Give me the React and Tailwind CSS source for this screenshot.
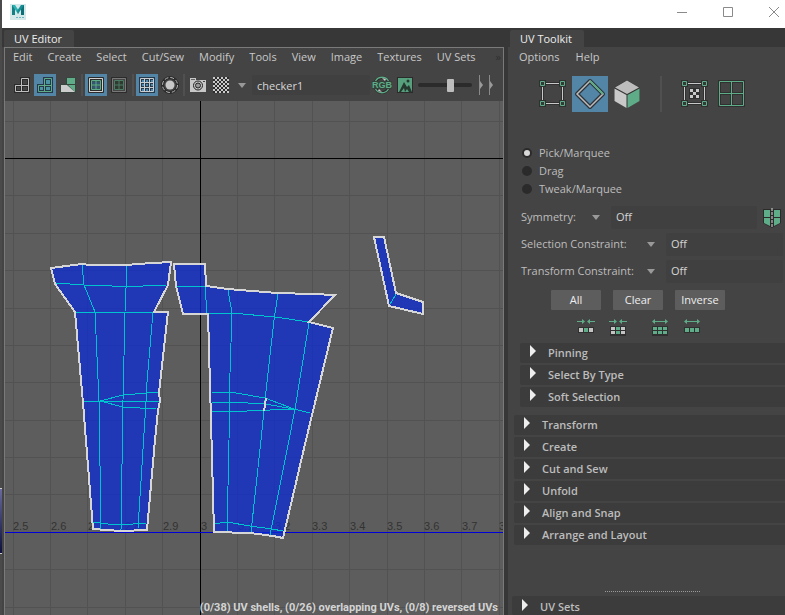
import React from "react";

const GREEN = "#5fad88";
const LIGHT = "#bfbfbf";
const EDGE = "#2b2b2b";

/* ---------- UV canvas ---------- */

const GRID_X = [13, 50, 87, 125, 162, 237, 274, 312, 349, 387, 424, 461, 499, 536, 574, 611, 649, 686, 724, 761];
const GRID_Y = [121, 195, 233, 270, 308, 345, 382, 420, 457, 494, 569, 607, 644, 681, 719, 756];
const LABELS = [
  [13, "2.5"], [51, "2.6"], [88, "2.7"], [125, "2.8"], [163, "2.9"], [201, "3"], [238, "3.1"],
  [275, "3.2"], [312, "3.3"], [350, "3.4"], [387, "3.5"], [424, "3.6"], [462, "3.7"], [499, "3.8"],
];

const SHELLS = [
  "51,268 82,264 90,265 127,265 138,264 153,263 171,262 168,285 154,312 168,312 159,393 160,401 158,410 155,440 147,530 121,531 107,530 93,529 83,403 75,312 55,284",
  "174,264 205,264 206,286 228,289 277,293 312,294 335,295 309,322 333,328 306,440 283,538 273,536 250,533 214,532 211,420 208,314 183,314 176,286",
  "374,237 384,237 396,293 423,302 423,314 389,306",
];

const EDGES = [
  "82,265 84,285 95,312 99,401 101,529",
  "127,265 125,312 123,400 121,530",
  "153,312 147,382 146,402 138,528",
  "55,283 84,285 112,286 125,286 143,286 166,285",
  "75,312 109,312 125,313 153,312",
  "83,401 160,401",
  "158,392 123,395 100,401 123,407 156,409",
  "93,522 108,524 121,525 146,523",
  "228,290 232,313 230,373 229,440 227,532",
  "278,294 274,320 265,400 261,440 251,532",
  "309,323 295,409 289,440 270,535",
  "176,286 205,286 207,313 232,313 275,317 309,322",
  "212,393 230,392 265,398 294,409 310,413",
  "212,402 230,402 265,404 294,409",
  "212,411 247,411 294,409",
  "214,524 227,522 250,526 272,529 283,531",
  "396,294 389,306",
];

function UvCanvas() {
  return (
    <div className="relative min-h-[300px] flex-1 overflow-hidden bg-[#5d5d5d]">
      <svg className="absolute inset-0 h-full w-full" aria-label="UV layout">
        <g transform="translate(-5 -101)" shapeRendering="crispEdges">
          {GRID_X.map((x) => <rect key={x} x={x} y="0" width="1" height="2000" fill="#525252" />)}
          {GRID_Y.map((y) => <rect key={y} x="0" y={y} width="3000" height="1" fill="#525252" />)}
          <rect x="200" y="0" width="1" height="2000" fill="#000" />
          <rect x="0" y="158" width="3000" height="1" fill="#000" />
          <rect x="0" y="532" width="3000" height="1" fill="#0000d8" />
          <g fill="#333" fontFamily="'Liberation Sans', Arial, sans-serif" fontSize="11">
            {LABELS.map(([x, t]) => <text key={t} x={x} y="530">{t}</text>)}
          </g>
          {SHELLS.map((p) => <polygon key={p} points={p} fill="#0c2cd4" fillOpacity="0.75" />)}
          {EDGES.map((p) => <polyline key={p} points={p} fill="none" stroke="#00c3d0" strokeWidth="1" />)}
          {SHELLS.map((p) => <polygon key={p} points={p} fill="none" stroke="#d6d6d6" strokeWidth="2" />)}
          <path d="M266 398L264 411" stroke="#d6d6d6" strokeWidth="2" />
        </g>
      </svg>
      <p className="absolute right-[5px] bottom-px font-[Roboto,Arial,sans-serif] text-[11px] leading-[13px] font-bold whitespace-nowrap text-[#d4d4d4]">
        (0/38) UV shells, (0/26) overlapping UVs, (0/8) reversed UVs
      </p>
    </div>
  );
}

/* ---------- small pieces ---------- */

function Svg({ w, h, children, className = "" }) {
  return (
    <svg width={w} height={h} viewBox={`0 0 ${w} ${h}`} className={`block shrink-0 ${className}`} aria-hidden="true" fill="none">
      {children}
    </svg>
  );
}

function Down() {
  return <Svg w={8} h={5}><path d="M0 0h8L4 5z" fill="#999999" /></Svg>;
}

function ToolButton({ label, active, children }) {
  return (
    <button
      type="button"
      aria-label={label}
      className={`flex size-[22px] shrink-0 items-center justify-center ${active ? "bg-[#5285a6]" : ""}`}
    >
      {children}
    </button>
  );
}

function Sep({ className }) {
  return <span className={`w-[2px] shrink-0 bg-[#505050] ${className}`} />;
}

const STEP = "M1.5 14.5V8.5H7.5V1.5H14.5V14.5ZM1.5 8.5H14.5M7.5 8.5V14.5";

function FlatShell() {
  return <Svg w={16} h={16}><path d={STEP} stroke={EDGE} strokeWidth="3" /><path d={STEP} stroke={LIGHT} /></Svg>;
}
function FilledShell() {
  return (
    <Svg w={16} h={16}>
      <path d={STEP} stroke="#27384a" strokeWidth="3" />
      <path d={STEP} stroke={GREEN} />
      <path d="M3 10h3v3H3zM9 10h4v3H9zM9 3h4v4H9z" fill="#4c93a5" />
    </Svg>
  );
}
function SplitShell() {
  return (
    <Svg w={16} h={16}>
      <path d="M0 7h6V0h10v16H0z" fill="#38443e" />
      <path d="M7 1h8v6H7z" fill={GREEN} />
      <path d="M8 8h7v7z" fill={GREEN} />
      <path d="M1 8h6l8 7H1z" fill="#cccccc" />
    </Svg>
  );
}
function BorderOn() {
  return (
    <Svg w={16} h={16}>
      <path d="M.5 .5h15v15H.5z" stroke={EDGE} />
      <path d="M1.5 1.5h13v13h-13z" stroke="#d2d2d2" />
      <path d="M2 2h12v12H2z" fill={EDGE} />
      <path d="M3.500 3.500h9v9h-9z" fill="#2f5a58" stroke={GREEN} />
      <path d="M8 4v8M4 8h8" stroke={GREEN} />
      <path d="M5 5h2v2H5zM9 5h2v2H9zM5 9h2v2H5zM9 9h2v2H9z" fill="#3d4f85" />
    </Svg>
  );
}
function BorderOff() {
  return (
    <Svg w={16} h={16}>
      <path d="M.5 .5h15v15H.5z" stroke={EDGE} />
      <path d="M1.5 1.5h13v13h-13z" stroke="#787878" />
      <path d="M3 3h10v10H3z" fill="#303830" />
      <path d="M3.500 3.500h9v9h-9zM8 3v10M3 8h10" stroke="#4b7d65" />
    </Svg>
  );
}
function GridIcon() {
  const d = "M1.5 1.5h13v13h-13zM5.5 1v14M10.5 1v14M1 5.5h14M1 10.5h14";
  return (
    <Svg w={16} h={16}>
      <path d="M.5 .5h15v15H.5z" stroke={EDGE} />
      <path d={d} stroke="#26394a" strokeWidth="3" />
      <path d={d} stroke="#c9cdd0" />
      <path d="M3 3h2v2H3zM7 3h2v2H7zM12 3h2v2h-2zM3 7h2v2H3zM7 7h2v2H7zM12 7h2v2h-2zM3 12h2v2H3zM7 12h2v2H7zM12 12h2v2h-2z" fill="#4c88b0" />
    </Svg>
  );
}
function IsolateIcon() {
  return (
    <Svg w={18} h={18}>
      <circle cx="9" cy="9" r="7.5" stroke={EDGE} strokeWidth="3" />
      <circle cx="9" cy="9" r="7.5" stroke="#b8b8b8" strokeDasharray="3.9 2" />
      <circle cx="9" cy="9" r="4.500" fill="#c8c8c8" />
    </Svg>
  );
}
function CameraIcon() {
  return (
    <Svg w={16} h={14}>
      <path d="M0 2V0h6v2h10v12H0z" fill="#c8c8c8" />
      <path d="M1 1.500h4" stroke="#666" />
      <circle cx="8" cy="7.500" r="4.500" stroke="#222" />
      <circle cx="8" cy="7.500" r="2.500" stroke="#222" fill="#999" />
      <path d="M13 3.500h2" stroke="#444" />
    </Svg>
  );
}
function CheckerIcon() {
  const cells = [];
  for (let r = 0; r < 8; r++) for (let c = 0; c < 8; c++) if ((r + c) % 2 === 0) cells.push([c * 2, r * 2]);
  return (
    <Svg w={16} h={16}>
      <path d="M0 0h16v16H0z" fill="#2d2d2d" />
      {cells.map(([x, y]) => <rect key={`${x}-${y}`} x={x} y={y} width="2" height="2" fill="#c8c8c8" />)}
    </Svg>
  );
}
function RgbIcon() {
  return (
    <Svg w={20} h={18}>
      <circle cx="10" cy="9" r="7.5" stroke={EDGE} strokeWidth="3" />
      <path d="M3.500 5A7.500 7.500 0 0 1 16.500 5M3.500 13A7.500 7.500 0 0 0 16.500 13" stroke={GREEN} strokeWidth="1.3" />
      <path d="M10 2l4 1-1 2zM10 16l-4-1 1-2z" fill="#ccc" />
      <path d="M0 5h20v8H0z" fill="#33433b" />
      <text x="10" y="12" textAnchor="middle" fontSize="9" fontWeight="700" fontFamily="'Liberation Sans', Arial, sans-serif" fill={GREEN}>RGB</text>
    </Svg>
  );
}
function ImageIcon() {
  return (
    <Svg w={16} h={16}>
      <path d="M0 0h16v16H0z" fill={EDGE} />
      <path d="M1 1h14v14H1z" fill="#57a07e" />
      <path d="M2 15L7 5l3 5 2-2 3 7h-3l-2-3-2 3-1-4-3 4z" fill="#26382f" />
      <circle cx="11" cy="4" r="1.5" fill="#26382f" />
    </Svg>
  );
}
function StepArrow() {
  return <Svg w={5} h={20}><path d="M.5 0v20" stroke="#8a8a8a" /><path d="M1 6l3 4-3 4z" fill="#9a9a9a" /></Svg>;
}

/* ---------- UV editor ---------- */

const MENUS = ["Edit", "Create", "Select", "Cut/Sew", "Modify", "Tools", "View", "Image", "Textures", "UV Sets"];

function Tab({ children }) {
  return (
    <div className="flex h-[19px] items-end bg-[#373737] pl-[2px]">
      <button type="button" role="tab" aria-selected="true" className="h-[17px] rounded-t-[2px] bg-[#444444] pr-3 pl-[10px] text-[11px] leading-[17px] text-[#eeeeee]">
        {children}
      </button>
    </div>
  );
}

function Editor() {
  return (
    <section className="flex min-w-0 flex-1 flex-col bg-[#444444]">
      <Tab>UV Editor</Tab>
      <div className="ml-[2px] flex flex-1 flex-col border-x border-t border-[#7a7a7a]">
        <nav className="flex h-[18px] items-center gap-[15px] pl-2 text-[11px] text-[#c8c8c8]">
          {MENUS.map((m) => <button type="button" key={m} className="shrink-0 whitespace-nowrap">{m}</button>)}
          <button type="button" aria-label="More" className="mr-[2px] ml-auto text-[#303030]">»</button>
        </nav>
        <div className="flex h-[35px] items-center gap-px pt-[3px] pl-[6px]">
          <ToolButton label="Wireframe shells"><FlatShell /></ToolButton>
          <ToolButton label="Shaded shells" active><FilledShell /></ToolButton>
          <ToolButton label="Distortion"><SplitShell /></ToolButton>
          <Sep className="mx-px h-[22px]" />
          <ToolButton label="Texture borders" active><BorderOn /></ToolButton>
          <ToolButton label="Shell borders"><BorderOff /></ToolButton>
          <Sep className="mx-px h-[22px]" />
          <ToolButton label="Grid" active><GridIcon /></ToolButton>
          <ToolButton label="Isolate"><IsolateIcon /></ToolButton>
          <Sep className="mx-px h-[22px]" />
          <ToolButton label="Snapshot"><CameraIcon /></ToolButton>
          <ToolButton label="Checker map"><CheckerIcon /></ToolButton>
          <button type="button" aria-label="Choose texture" className="mx-1 shrink-0 p-px"><Down /></button>
          <input
            aria-label="Texture"
            defaultValue="checker1"
            className="h-[20px] w-[118px] min-w-0 rounded-[2px] bg-[#404040] px-[5px] text-[11px] text-[#d6d6d6] outline-none"
          />
          <div className="flex flex-1 items-center gap-px">
            <ToolButton label="RGB channels"><RgbIcon /></ToolButton>
            <ToolButton label="Texture image"><ImageIcon /></ToolButton>
            <input
              type="range"
              aria-label="Dim image"
              defaultValue="62"
              className="ml-px h-[14px] w-[54px] appearance-none bg-transparent [&::-webkit-slider-runnable-track]:h-1 [&::-webkit-slider-runnable-track]:rounded-sm [&::-webkit-slider-runnable-track]:bg-[#2b2b2b] [&::-webkit-slider-thumb]:-mt-1 [&::-webkit-slider-thumb]:h-[13px] [&::-webkit-slider-thumb]:w-[7px] [&::-webkit-slider-thumb]:appearance-none [&::-webkit-slider-thumb]:rounded-[1px] [&::-webkit-slider-thumb]:bg-[#bdbdbd]"
            />
            <div className="ml-[6px] flex gap-[5px]"><StepArrow /><StepArrow /></div>
          </div>
        </div>
        <UvCanvas />
      </div>
    </section>
  );
}

/* ---------- UV toolkit ---------- */

function Corners() {
  return (
    <>
      <path d="M6 3.500h14M6 23.500h14M3.500 6v14M23.500 6v14" stroke="#303030" strokeWidth="3" />
      <path d="M7 3.500h13M7 23.500h13M3.500 7v13M23.500 7v13" stroke="#c8c8c8" />
      <path d="M0 0h7v7H0zM20 0h7v7h-7zM0 20h7v7H0zM20 20h7v7h-7z" fill="#303030" />
      <path d="M1.500 1.500h4v4h-4zM21.500 1.500h4v4h-4zM1.500 21.500h4v4h-4zM21.500 21.500h4v4h-4z" fill="#303b36" stroke={GREEN} />
    </>
  );
}

function ModeButton({ label, active, children }) {
  return (
    <button type="button" aria-label={label} className={`flex size-9 shrink-0 items-center justify-center ${active ? "bg-[#5285a6]" : ""}`}>
      {children}
    </button>
  );
}

function Modes() {
  return (
    <div className="mt-[9px] flex items-center gap-px pl-[27px]">
      <ModeButton label="Vertex selection"><Svg w={28} h={28}><Corners /></Svg></ModeButton>
      <ModeButton label="Edge selection" active>
        <Svg w={32} h={32}>
          <path d="M16 3L29 16L16 29L3 16Z" stroke="#2d3338" strokeWidth="4" strokeLinejoin="round" />
          <path d="M16 3L29 16L16 29L3 16Z" stroke="#bcbcbc" strokeWidth="1.5" />
          <path d="M16 3L29 16" stroke={GREEN} strokeWidth="2" />
        </Svg>
      </ModeButton>
      <ModeButton label="Face selection">
        <Svg w={26} h={30}>
          <path d="M13 1L25.500 8.500V21.500L13 29L.5 21.500V8.500Z" fill="#333" />
          <path d="M13 1.500L25 8.500L13 15L1 8.500Z" fill="#bdbdbd" />
          <path d="M.5 9.500L12.500 16V29L.5 22Z" fill="#c9c9c9" />
          <path d="M13.500 16L25.500 9.500V22L13.500 29Z" fill={GREEN} />
        </Svg>
      </ModeButton>
      <Sep className="mx-[14px] h-9" />
      <ModeButton label="UV selection">
        <Svg w={28} h={28}>
          <Corners />
          <path d="M8 8h11v11H8z" fill="#303030" />
          <path d="M9 9h3v3H9zM15 9h3v3h-3zM12 12h3v3h-3zM9 15h3v3H9zM15 15h3v3h-3z" fill="#c8c8c8" />
        </Svg>
      </ModeButton>
      <ModeButton label="Shell selection">
        <Svg w={28} h={28}>
          <path d="M1.500 1.500h24v24h-24zM13.500 1.500v24M1.500 13.500h24" stroke="#303030" strokeWidth="3" />
          <path d="M1.500 1.500h24v24h-24zM13.500 1.500v24M1.500 13.500h24" stroke={GREEN} />
        </Svg>
      </ModeButton>
    </div>
  );
}

function Radio({ label, checked }) {
  return (
    <label className="flex h-[18px] items-center gap-[7px]">
      <input
        type="radio"
        name="pick"
        defaultChecked={checked}
        className="size-[10px] appearance-none rounded-full border-2 border-[#2b2b2b] bg-[#2b2b2b] checked:bg-[#d8d8d8]"
      />
      {label}
    </label>
  );
}

function Picker({ id, label, labelClass, children }) {
  return (
    <div className="flex h-[27px] items-center pr-[2px]">
      <label htmlFor={id} className={`shrink-0 ${labelClass}`}>{label}</label>
      <Down />
      <select id={id} className="ml-[11px] h-[23px] min-w-0 flex-1 appearance-none rounded-[2px] bg-[#404040] px-[5px] text-[#d6d6d6] outline-none">
        <option>Off</option>
      </select>
      {children}
    </div>
  );
}

function SymmetryIcon() {
  return (
    <Svg w={18} h={20} className="mr-[2px] ml-[6px]">
      <path d="M0 1h18v14l-9 5-9-5z" fill={EDGE} />
      <path d="M1 2h6v7H1zM1 10h6v8l-6-3zM11 2h6v7h-6zM11 10h6v5l-6 3z" fill={GREEN} />
      <path d="M9 0v20" stroke="#ddd" strokeDasharray="3 1" />
    </Svg>
  );
}

function Arrows({ inward }) {
  return inward ? (
    <>
      <path d="M0 2.500h6M12 2.500h6" stroke={GREEN} />
      <path d="M5 0l3 2.500L5 5zM13 0l-3 2.500L13 5z" fill={GREEN} />
    </>
  ) : (
    <>
      <path d="M3 2.500h12" stroke={GREEN} />
      <path d="M4 0L1 2.500 4 5zM14 0l3 2.500L14 5z" fill={GREEN} />
    </>
  );
}

function GrowIcon({ inward, tall }) {
  const side = inward ? "#c4c4c4" : GREEN;
  const rows = tall ? [[8, 3], [12, 3]] : [[9, 4]];
  return (
    <Svg w={18} h={17}>
      <path d={tall ? "M1 7h16v10H1z" : "M1 8h16v6H1z"} fill="#303030" />
      <Arrows inward={inward} />
      {rows.map(([y, h]) => (
        <g key={y}>
          <rect x="2" y={y} width="4" height={h} fill={side} />
          <rect x="7" y={y} width="4" height={h} fill={GREEN} />
          <rect x="12" y={y} width="4" height={h} fill={side} />
        </g>
      ))}
    </Svg>
  );
}

function Section({ title, className = "h-[20px]" }) {
  return (
    <button type="button" aria-expanded="false" className={`flex w-full items-center rounded-l-[2px] bg-[#3c3c3c] pl-[10px] text-left font-semibold text-[#bdbdbd] ${className}`}>
      <Svg w={6} h={16}><path d="M0 0l6 6-6 6z" fill="#eeeeee" /></Svg>
      <span className="ml-3">{title}</span>
    </button>
  );
}

function Toolkit() {
  return (
    <aside className="flex w-[277px] shrink-0 flex-col bg-[#444444] text-[11px] text-[#bdbdbd]">
      <Tab>UV Toolkit</Tab>
      <nav className="flex h-[20px] items-center gap-4 pl-[11px] text-[#c8c8c8]">
        <button type="button">Options</button>
        <button type="button">Help</button>
      </nav>
      <Modes />
      <fieldset className="mt-8 pl-[14px]">
        <Radio label="Pick/Marquee" checked />
        <Radio label="Drag" />
        <Radio label="Tweak/Marquee" />
      </fieldset>
      <div className="mt-[6px] pl-[13px]">
        <Picker id="symmetry" label="Symmetry:" labelClass="w-[71px]"><SymmetryIcon /></Picker>
        <Picker id="selcon" label="Selection Constraint:" labelClass="w-[126px]" />
        <Picker id="xfcon" label="Transform Constraint:" labelClass="w-[126px]" />
      </div>
      <div className="mt-[5px] flex gap-3 pl-[43px] text-[#eeeeee]">
        {["All", "Clear", "Inverse"].map((t) => (
          <button type="button" key={t} className="h-[20px] w-[50px] rounded-[1px] bg-[#5d5d5d]">{t}</button>
        ))}
      </div>
      <div className="mt-[9px] flex pl-[69px]">
        <button type="button" aria-label="Shrink"><GrowIcon inward /></button>
        <button type="button" aria-label="Shrink loop" className="ml-[14px]"><GrowIcon inward tall /></button>
        <button type="button" aria-label="Grow" className="ml-6"><GrowIcon tall /></button>
        <button type="button" aria-label="Grow loop" className="ml-[14px]"><GrowIcon /></button>
      </div>
      <div className="mt-[7px] flex flex-col gap-[2px] pl-3">
        {["Pinning", "Select By Type", "Soft Selection"].map((t) => <Section key={t} title={t} />)}
      </div>
      <div className="mt-2 flex flex-col gap-[2px] pl-[6px]">
        {["Transform", "Create", "Cut and Sew", "Unfold", "Align and Snap", "Arrange and Layout"].map((t) => <Section key={t} title={t} />)}
      </div>
      <div className="mt-auto flex flex-col pl-1">
        <Svg w={96} h={1} className="mb-1 ml-2 self-center"><path d="M0 .5h96" stroke="#9a9a9a" strokeDasharray="1 1" shapeRendering="crispEdges" /></Svg>
        <Section title="UV Sets" className="h-[19px] pt-[3px]" />
      </div>
    </aside>
  );
}

/* ---------- window ---------- */

function TitleBar() {
  return (
    <header className="flex h-7 shrink-0 items-center justify-between bg-white pr-[5px] pl-2">
      <svg width="16" height="16" viewBox="0 0 16 16" className="-mt-1 block" role="img" aria-label="Maya">
        <path d="M0 0h16v16H0z" fill="#d6e9ea" />
        <path d="M2 1h3v10H2z" fill="#167f84" />
        <path d="M11 1h3v10h-3z" fill="#0f6f76" />
        <path d="M2 1h3l4 6-1 3z" fill="#2fb0b0" />
        <path d="M14 1h-3L7 7l1 3z" fill="#178f94" />
        <path d="M6 13.500h8" stroke="#6fb9bd" strokeDasharray="2 1" />
      </svg>
      <div className="-mt-1 flex items-center gap-[34px] text-[#8a8a8a]">
        <button type="button" aria-label="Minimize"><Svg w={12} h={12}><path d="M1 6.500h10" stroke="currentColor" /></Svg></button>
        <button type="button" aria-label="Maximize"><Svg w={12} h={12}><path d="M1.500 1.500h9v9h-9z" stroke="currentColor" /></Svg></button>
        <button type="button" aria-label="Close"><Svg w={12} h={12}><path d="M1 1l10 10M11 1L1 11" stroke="currentColor" /></Svg></button>
      </div>
    </header>
  );
}

export default function App() {
  return (
    <div className="flex min-h-screen bg-[#444444] font-['Open_Sans','Noto_Sans',sans-serif]">
      <div className="flex w-[2px] shrink-0 flex-col justify-end bg-[#4a4a4a] pb-[61px]">
        <div className="h-[66px] border-y border-[#cccccc] bg-gradient-to-b from-[#6a6a9c] to-[#10103c]" />
      </div>
      <div className="flex min-w-0 flex-1 flex-col">
        <TitleBar />
        <main className="flex min-w-0 flex-1">
          <Editor />
          <div className="w-1 shrink-0 bg-[#373737]" />
          <Toolkit />
        </main>
      </div>
    </div>
  );
}
